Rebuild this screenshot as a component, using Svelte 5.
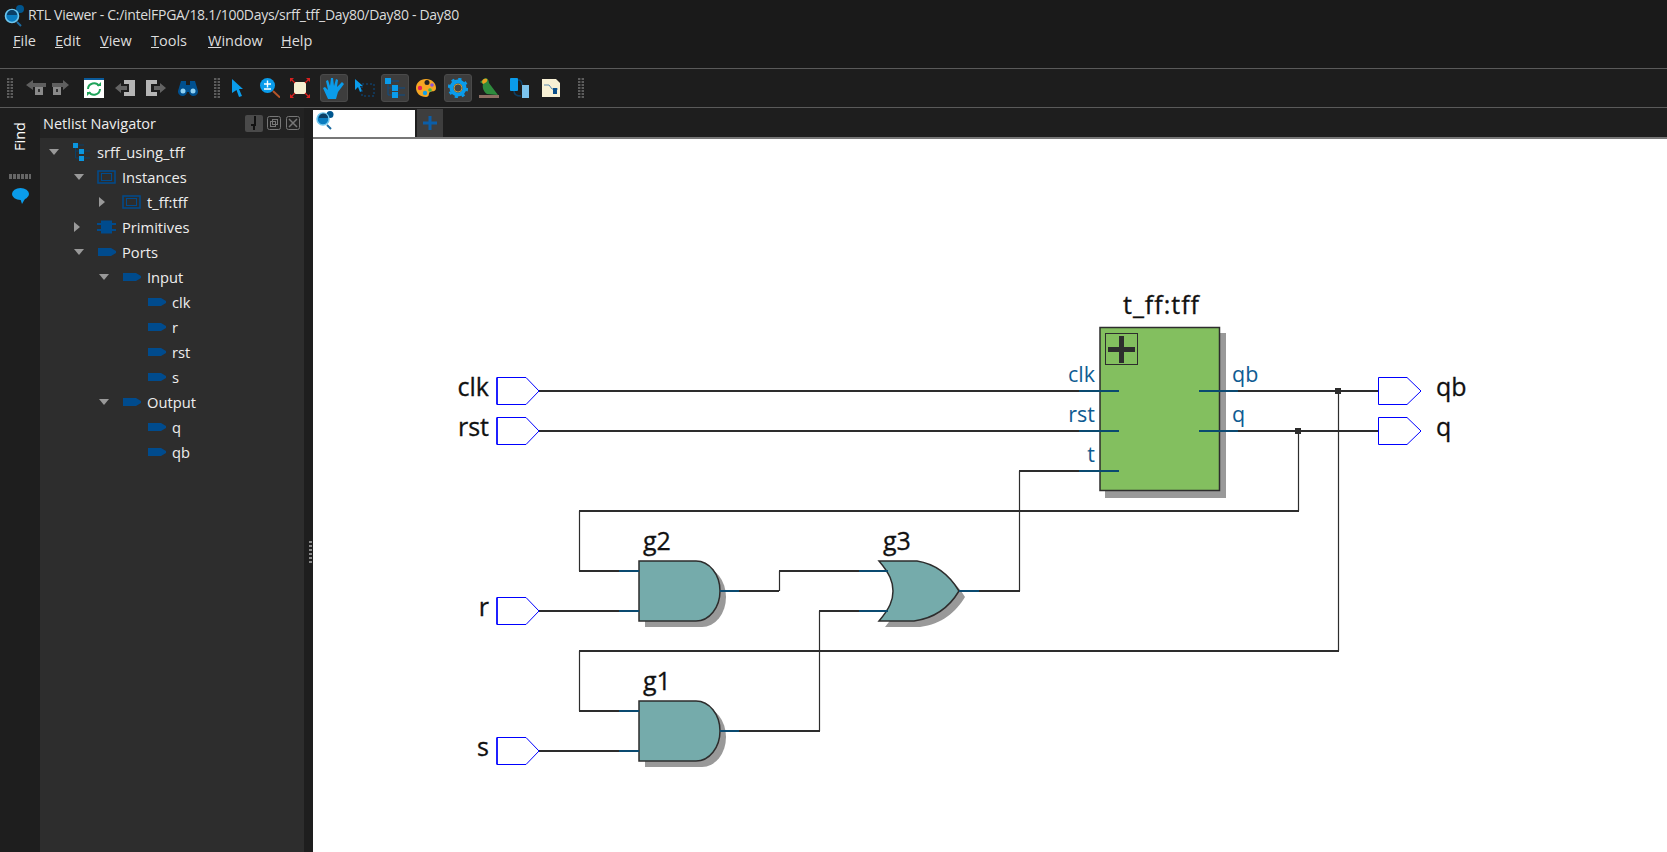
<script>
  const menus = [
    { t: 'File', w: 42 }, { t: 'Edit', w: 45 }, { t: 'View', w: 51 },
    { t: 'Tools', w: 57 }, { t: 'Window', w: 73 }, { t: 'Help', w: 40 }
  ];
  const tree = [
    { l: 0, t: 'srff_using_tff', a: 'd', i: 'h' },
    { l: 1, t: 'Instances', a: 'd', i: 'b' },
    { l: 2, t: 't_ff:tff', a: 'r', i: 'b' },
    { l: 1, t: 'Primitives', a: 'r', i: 'c' },
    { l: 1, t: 'Ports', a: 'd', i: 'p' },
    { l: 2, t: 'Input', a: 'd', i: 'p' },
    { l: 3, t: 'clk', a: '', i: 'p' },
    { l: 3, t: 'r', a: '', i: 'p' },
    { l: 3, t: 'rst', a: '', i: 'p' },
    { l: 3, t: 's', a: '', i: 'p' },
    { l: 2, t: 'Output', a: 'd', i: 'p' },
    { l: 3, t: 'q', a: '', i: 'p' },
    { l: 3, t: 'qb', a: '', i: 'p' }
  ];
  const inPins = [
    { n: 'clk', y: 391 }, { n: 'rst', y: 431 }, { n: 'r', y: 611 }, { n: 's', y: 751 }
  ];
  const outPins = [{ n: 'qb', y: 391 }, { n: 'q', y: 431 }];
  const horiz = [
    'M539 391H1080', 'M539 431H1080', 'M1238 391H1378', 'M1238 431H1378',
    'M579 511H1299', 'M579 571H620', 'M739 591H779', 'M779 571H860', 'M979 591H1020',
    'M1019 471H1080', 'M579 651H1339', 'M579 711H620', 'M739 731H820', 'M819 611H860',
    'M539 611H620', 'M539 751H620'
  ];
  const vert = [
    'M1298.500 431V511', 'M579.500 511V571', 'M779.500 571V591', 'M1019.500 471V591',
    'M1338.500 391V651', 'M579.500 651V711', 'M819.500 611V731'
  ];
  const stubs = [
    'M1079 391H1119', 'M1079 431H1119', 'M1079 471H1119', 'M1199 391H1238', 'M1199 431H1238',
    'M619 571H639', 'M619 611H639', 'M619 711H639', 'M619 751H639', 'M720 591H739', 'M720 731H739',
    'M859 571H888', 'M859 611H888', 'M959 591H979'
  ];
  const andGate = 'M639 0H696A24 30 0 0 1 696 60H639Z';
  const orGate = 'M879 561H917C936 564 950 576 959 591C950 606 936 618 914 621H879C890 608 893 600 893 591C893 582 890 574 879 561Z';
</script>

{#snippet grip()}
  <svg class="grip" width="7" height="20" viewBox="0 0 7 20">
    {#each [0, 3, 6, 9, 12, 15, 18] as y}
      <rect x="0" {y} width="2.400" height="2" fill="#5c5c5c" /><rect x="3.600" {y} width="2.400" height="2" fill="#5c5c5c" />
    {/each}
  </svg>
{/snippet}

{#snippet treeIcon(kind)}
  {#if kind === 'h'}
    <svg class="ti" width="20" height="18" viewBox="0 0 20 18">
      <rect x="1" y="0" width="5" height="5" fill="#0a96e0" /><rect x="7" y="6" width="5" height="5" fill="#0a96e0" /><rect x="7" y="13" width="5" height="5" fill="#0a96e0" />
      <path d="M6 2H12M3.500 5V8H7M3.500 8V15H7M12 8H18M12 15H18" stroke="#0b3f66" fill="none" />
    </svg>
  {:else if kind === 'b'}
    <svg class="ti" width="20" height="14" viewBox="0 0 20 14">
      <rect x="1" y="1" width="17" height="12" fill="none" stroke="#004b8d" stroke-width="1.500" /><rect x="4.500" y="3.500" width="10" height="7" fill="none" stroke="#004b8d" />
    </svg>
  {:else if kind === 'c'}
    <svg class="ti" width="20" height="14" viewBox="0 0 20 14">
      <rect x="4" y="0.500" width="11" height="13" fill="#004b8d" /><path d="M0 4H19M0 10H19" stroke="#004b8d" stroke-width="2" />
    </svg>
  {:else}
    <svg class="ti" width="20" height="10" viewBox="0 0 20 10">
      <path d="M1 1H14L19 4V6L14 9H1Z" fill="#004b8d" />
    </svg>
  {/if}
{/snippet}

<div class="app">
  <header class="title">
    <svg width="24" height="26" viewBox="0 0 24 26">
      <circle cx="18" cy="7" r="4" fill="#00568f" />
      <circle cx="10" cy="14" r="6.500" fill="#0a7cc0" stroke="#6ec6ee" stroke-width="1.600" />
      <path d="M5 13A5 5 0 0 1 15 13Z" fill="#0b3f66" />
      <path d="M15 20L19 24" stroke="#1b6aa0" stroke-width="2" />
    </svg>
    <span>RTL Viewer - C:/intelFPGA/18.1/100Days/srff_tff_Day80/Day80 - Day80</span>
  </header>
  <nav class="menu">
    {#each menus as m}
      <span class="mi" style="width:{m.w}px"><u>{m.t[0]}</u>{m.t.slice(1)}</span>
    {/each}
  </nav>
  <div class="toolbar">
    {@render grip()}
    <div class="tools first">
      <svg width="22" height="16" viewBox="0 0 22 16"><path d="M1 5L8 0V3H21V7H8V10Z" fill="#5f5f5f" /><rect x="10" y="7" width="8" height="8" fill="#8a8a8a" /><rect x="13" y="9" width="2" height="3" fill="#333" /></svg>
      <svg class="s0" width="18" height="16" viewBox="0 0 18 16"><path d="M17 5L11 0V3H0V7H11V10Z" fill="#5f5f5f" /><rect x="1" y="7" width="8" height="8" fill="#8a8a8a" /><rect x="4" y="9" width="2" height="3" fill="#333" /></svg>
      <svg class="s1" width="20" height="20" viewBox="0 0 20 20"><rect width="20" height="20" fill="#fff" /><rect width="20" height="2" fill="#0a5a9a" /><path d="M4 11A6 6 0 0 1 15 8M16 11A6 6 0 0 1 5 14" stroke="#1fa35a" stroke-width="2" fill="none" /><path d="M13 8H17V4ZM7 14H3V18Z" fill="#1fa35a" /></svg>
      <svg class="s2" width="20" height="18" viewBox="0 0 20 18"><path d="M0 9L6 4V7H12V11H6V14Z" fill="#636363" /><path d="M9 1H20V17H9V13H14V5H9Z" fill="#b5b5b5" /></svg>
      <svg class="s2" width="20" height="18" viewBox="0 0 20 18"><path d="M0 1H11V5H5V13H11V17H0Z" fill="#b5b5b5" /><path d="M8 7H14V4L20 9L14 14V11H8Z" fill="#636363" /></svg>
      <svg class="s3" width="20" height="16" viewBox="0 0 20 16"><path d="M3 1H8V5H12V1H17L20 11A4.500 4.500 0 0 1 11 12H9A4.500 4.500 0 0 1 0 11Z" fill="#00508f" /><circle cx="5" cy="11" r="2.500" fill="#8fd0f2" /><circle cx="15" cy="11" r="2.500" fill="#8fd0f2" /></svg>
    </div>
    <span class="g2">{@render grip()}</span>
    <div class="tools second">
      <svg width="12" height="18" viewBox="0 0 12 18"><path d="M0 0L11 10H7L10 17L7 18L4.500 11L0 14Z" fill="#0a9ceb" /></svg>
      <svg class="z" width="20" height="20" viewBox="0 0 20 20"><circle cx="7.500" cy="7.500" r="7.500" fill="#0a9ceb" /><path d="M4 6H11M7.500 2.500V9.500M4 11H11" stroke="#fff" stroke-width="1.400" /><path d="M13 13L20 19.500" stroke="#b5552a" stroke-width="2" /></svg>
      <svg class="y" width="20" height="20" viewBox="0 0 20 20"><rect x="4" y="4" width="12" height="12" fill="#f5efd0" /><path d="M1 1L5 5M19 1L15 5M1 19L5 15M19 19L15 15" stroke="#d8201f" stroke-width="1.200" /><path d="M0 0H4L0 4ZM20 0H16L20 4ZM0 20H4L0 16ZM20 20H16L20 16Z" fill="#d8201f" /></svg>
      <span class="tb hand"><svg width="22" height="21" viewBox="0 0 22 21"><path d="M5 21L0 10L2 9L5 12L3 3L5 2L7 8L8 0H10L11 8L13 1L15 2L14 9L19 4L21 6L15 14L13 21Z" fill="#0a9ceb" /></svg></span>
      <svg class="z2" width="20" height="18" viewBox="0 0 20 18"><path d="M0 0L8 7H5L7 12L5 13L3 8L0 11Z" fill="#0a9ceb" /><rect x="7" y="5" width="12" height="12" fill="none" stroke="#0b4f8a" stroke-dasharray="2 2" /></svg>
      <span class="tb tree-b"><svg width="20" height="20" viewBox="0 0 20 20"><rect x="0" y="0" width="6" height="6" fill="#0a9ceb" /><rect x="7" y="7" width="6" height="6" fill="#0a9ceb" /><rect x="7" y="14" width="6" height="6" fill="#0a9ceb" /><path d="M6 3H14M3 6V17H7M3 10H7M13 10H20M13 17H20" stroke="#0b4f8a" fill="none" /></svg></span>
      <svg class="p" width="20" height="20" viewBox="0 0 20 20"><path d="M10 1C16 1 20 5 20 10C20 14 16 13 14 14C12 15 14 19 10 19C4 19 0 15 0 10C0 5 4 1 10 1Z" fill="#f5a623" /><circle cx="11" cy="4.500" r="2.500" fill="#222" /><circle cx="4" cy="10" r="2.200" fill="#e8205a" /><circle cx="9" cy="15" r="2.200" fill="#12a0e8" /><circle cx="14" cy="12" r="1.800" fill="#3db54a" /><circle cx="16" cy="7" r="1.800" fill="#8c52d8" /></svg>
      <span class="tb gear"><svg width="20" height="20" viewBox="0 0 20 20"><circle cx="10" cy="10" r="6.500" fill="none" stroke="#0a9ceb" stroke-width="4" /><circle cx="10" cy="10" r="9" fill="none" stroke="#0a9ceb" stroke-width="2.400" stroke-dasharray="3.200 3.860" /><circle cx="10" cy="10" r="4" fill="#444" stroke="#c69a3a" /></svg></span>
      <svg class="b" width="20" height="20" viewBox="0 0 20 20"><rect x="0" y="17" width="20" height="3" fill="#8d6e63" /><path d="M6 0C9 0 10 3 10 5L19 17L8 16C5 14 3 10 4 6L1 4Z" fill="#2e8b3d" /><path d="M3 4C3 1 6 0 8 1C9 3 7 5 4 6Z" fill="#e8a020" /></svg>
      <svg class="s2" width="20" height="20" viewBox="0 0 20 20"><rect x="0" y="0" width="8" height="13" rx="1" fill="#0a9ceb" /><rect x="12" y="7" width="7" height="13" fill="#7cc4ee" /><path d="M8 2C11 2 12 4 12 7M11 18C6 18 4 16 4 13" stroke="#0b3f66" stroke-width="1.500" fill="none" /></svg>
      <svg class="n" width="18" height="18" viewBox="0 0 18 18"><path d="M0 0H14L18 4V18H0Z" fill="#f7f0d4" /><path d="M2 6H7L10 10H16M12 10V15" stroke="#5a8ab0" fill="none" /><rect x="11" y="9" width="4" height="6" fill="#0b4f8a" /></svg>
    </div>
    <span class="g3">{@render grip()}</span>
  </div>

  <div class="body">
    <aside class="strip">
      <span class="find">Find</span>
      <span class="dots"></span>
      <svg width="17" height="17" viewBox="0 0 17 17"><ellipse cx="8.500" cy="7" rx="8.500" ry="6" fill="#0a9ceb" /><path d="M8 11L14 10L10 17Z" fill="#0a9ceb" /></svg>
    </aside>
    <section class="nav">
      <div class="navhead">
        <span>Netlist Navigator</span>
        <div class="navbtns">
          <span class="nb on"><svg width="10" height="14" viewBox="0 0 10 14"><path d="M6 0V9H2M5 9V14" stroke="#111" stroke-width="2" fill="none" /></svg></span>
          <span class="nb"><svg width="14" height="14" viewBox="0 0 14 14"><rect x="0.500" y="0.500" width="13" height="13" rx="2" fill="none" stroke="#777" /><rect x="5.500" y="3.500" width="5" height="5" fill="none" stroke="#777" /><rect x="3.500" y="5.500" width="5" height="5" fill="none" stroke="#777" /></svg></span>
          <span class="nb"><svg width="14" height="14" viewBox="0 0 14 14"><rect x="0.500" y="0.500" width="13" height="13" rx="2" fill="none" stroke="#777" /><path d="M3 3L11 11M11 3L3 11" stroke="#777" stroke-width="1.500" /></svg></span>
        </div>
      </div>
      <ul class="tree">
        {#each tree as n}
          <li style="padding-left:{n.l * 25 + 6}px">
            <span class="arrow">
              {#if n.a === 'd'}
                <svg width="10" height="6" viewBox="0 0 10 6"><path d="M0 0H10L5 6Z" fill="#999" /></svg>
              {:else if n.a === 'r'}
                <svg width="6" height="10" viewBox="0 0 6 10"><path d="M0 0V10L6 5Z" fill="#999" /></svg>
              {/if}
            </span>
            <span class="iconbox">{@render treeIcon(n.i)}</span>
            <span class="lbl">{n.t}</span>
          </li>
        {/each}
      </ul>
    </section>
    <div class="split"><span></span></div>
    <main class="main">
      <div class="tabs">
        <div class="tab">
          <svg width="22" height="24" viewBox="0 0 22 24">
            <circle cx="14" cy="4.500" r="3.500" fill="#00568f" />
            <circle cx="7" cy="9" r="6" fill="#0a7cc0" stroke="#6ec6ee" stroke-width="1.500" />
            <path d="M3 8A4.500 4.500 0 0 1 12 8Z" fill="#0b3f66" />
            <path d="M11 15L15 19" stroke="#1b6aa0" stroke-width="2" />
          </svg>
        </div>
        <div class="plus"><svg width="14" height="14" viewBox="0 0 14 14"><path d="M7 0V14M0 7H14" stroke="#0b5ea8" stroke-width="3" /></svg></div>
      </div>
      <svg class="canvas" width="1354" height="713" viewBox="313 139 1354 713">
        <rect x="1105" y="333" width="121" height="165" fill="#999" />
        <rect x="1100" y="327.500" width="119.500" height="163" fill="#83bf5f" stroke="#2d2d2d" stroke-width="1.500" />
        <rect x="1105.500" y="333.500" width="32" height="31" fill="none" stroke="#2d2d2d" />
        <path d="M1108 349.500H1135M1121.500 336V363" stroke="#2d2d2d" stroke-width="5" />

        <path transform="translate(6 567)" d={andGate} fill="#999" />
        <path transform="translate(0 561)" d={andGate} fill="#75abab" stroke="#2d2d2d" stroke-width="1.500" />
        <path transform="translate(6 707)" d={andGate} fill="#999" />
        <path transform="translate(0 701)" d={andGate} fill="#75abab" stroke="#2d2d2d" stroke-width="1.500" />
        <path transform="translate(6 6)" d={orGate} fill="#999" />
        <path d={orGate} fill="#75abab" stroke="#2d2d2d" stroke-width="1.500" />

        {#each horiz as d}
          <path {d} class="wire" />
        {/each}
        {#each vert as d}
          <path {d} class="vwire" />
        {/each}
        {#each stubs as d}
          <path {d} class="stub" />
        {/each}
        <rect x="1335" y="388" width="6" height="6" fill="#2d2d2d" />
        <rect x="1295" y="428" width="6" height="6" fill="#2d2d2d" />

        {#each inPins as p}
          <path class="pin" d="M497 {p.y - 13.500}H526L539 {p.y}L526 {p.y + 13.500}H497Z" />
          <path d="M497 {p.y - 13.500}V{p.y + 13.500}" stroke="#0000ff" stroke-width="1.500" />
          <text class="big end" x="489" y={p.y + 5}>{p.n}</text>
        {/each}
        {#each outPins as p}
          <path class="pin" d="M1378.500 {p.y - 13.500}H1407L1421 {p.y}L1407 {p.y + 13.500}H1378.500Z" />
          <text class="big" x="1436" y={p.y + 5}>{p.n}</text>
        {/each}

        <text class="big title-t" x="1123" y="314">t_ff:tff</text>
        <text class="big" x="643" y="550">g2</text>
        <text class="big" x="643" y="690">g1</text>
        <text class="big" x="883" y="550">g3</text>

        <text class="port end" x="1095" y="382">clk</text>
        <text class="port end" x="1095" y="422">rst</text>
        <text class="port end" x="1095" y="462">t</text>
        <text class="port" x="1232" y="382">qb</text>
        <text class="port" x="1232" y="422">q</text>
      </svg>
    </main>
  </div>
</div>

<style>
  :global(body) { margin: 0; background: #1e1e1e; overflow: hidden; }
  .app { width: 1667px; height: 852px; display: flex; flex-direction: column; background: #1e1e1e; color: #eee; font-family: "Open Sans", "Noto Sans", sans-serif; font-size: 14.500px; overflow: hidden; }
  .title { height: 29px; display: flex; align-items: center; gap: 2px; background: #1a1a1a; padding-left: 2px; box-sizing: border-box; font-size: 14px; letter-spacing: -0.300px; }
  .title span { color: #dcdcdc; }
  .menu { height: 40px; display: flex; background: #1a1a1a; padding: 0 0 17px 13px; box-sizing: border-box; align-items: center; border-bottom: 1px solid #5a5a5a; }
  .mi { color: #ddd; flex: none; }
  .toolbar { height: 39px; box-sizing: border-box; border-bottom: 1px solid #5a5a5a; display: flex; align-items: center; padding-left: 7px; background: #1d1d1d; }
  .tools { display: flex; align-items: center; }
  .first { margin-left: 11px; }
  .s0 { margin-left: 5px; }
  .s1 { margin-left: 14px; }
  .s2 { margin-left: 11px; }
  .s3 { margin-left: 12px; }
  .g2 { margin-left: 16px; display: flex; }
  .second { margin-left: 11px; }
  .z { margin-left: 16px; }
  .y { margin-left: 10px; }
  .z2 { margin-left: 7px; }
  .tb { width: 28px; height: 28px; background: #3d3d3d; border: 1px solid #4a4a4a; border-radius: 3px; display: flex; align-items: center; justify-content: center; box-sizing: border-box; flex: none; }
  .hand { margin-left: 10px; }
  .tree-b { margin-left: 6px; }
  .p { margin-left: 7px; }
  .gear { margin-left: 8px; }
  .b { margin-left: 7px; }
  .n { margin-left: 12px; }
  .g3 { margin-left: 18px; display: flex; }
  .body { flex: 1; display: flex; min-height: 0; }
  .strip { width: 40px; display: flex; flex-direction: column; align-items: center; background: #1e1e1e; padding-top: 14px; box-sizing: border-box; }
  .find { writing-mode: vertical-rl; transform: rotate(180deg); font-size: 14.500px; color: #fff; line-height: 16px; }
  .dots { width: 22px; height: 5px; margin: 23px 0 8px; background: repeating-linear-gradient(90deg, #666 0 3px, transparent 3px 4px); }
  .nav { width: 264px; display: flex; flex-direction: column; background: #2d2d2d; }
  .navhead { height: 30px; background: #222; display: flex; align-items: center; justify-content: space-between; padding: 0 4px 0 3px; box-sizing: border-box; color: #eee; }
  .navbtns { display: flex; gap: 5px; align-items: center; }
  .nb { width: 14px; height: 15px; display: flex; align-items: center; justify-content: center; }
  .nb.on { width: 18px; height: 17px; background: #4a4a4a; border-radius: 2px; margin-right: -1px; }
  .tree { list-style: none; margin: 0; padding: 1px 0 0; font-size: 14.700px; }
  .tree li { height: 25px; display: flex; align-items: center; }
  .arrow { width: 16px; margin-left: 3px; display: flex; align-items: center; }
  .iconbox { width: 25px; margin-left: 7px; display: flex; align-items: center; }
  .lbl { color: #eee; }
  .split { width: 9px; background: #1e1e1e; position: relative; }
  .split span { position: absolute; left: 5px; top: 433px; width: 3px; height: 24px; background: repeating-linear-gradient(180deg, #888 0 2px, transparent 2px 4px); }
  .main { flex: 1; display: flex; flex-direction: column; min-width: 0; }
  .tabs { height: 31px; flex: none; display: flex; align-items: flex-end; background: #1e1e1e; border-bottom: 2px solid #777; box-sizing: border-box; }
  .tab { width: 102px; height: 27px; background: #fff; display: flex; align-items: flex-start; padding-left: 3px; box-sizing: border-box; }
  .plus { width: 26px; height: 28px; background: #3e3e3e; margin-left: 2px; display: flex; align-items: center; justify-content: center; }
  .canvas { display: block; background: #fff; flex: none; }
  .wire { fill: none; stroke: #2d2d2d; stroke-width: 2; }
  .vwire { fill: none; stroke: #2d2d2d; stroke-width: 1.200; }
  .stub { fill: none; stroke: #0a4a70; stroke-width: 2; }
  .pin { fill: #fff; stroke: #0000ff; stroke-width: 1; }
  .big { font-family: "Open Sans", sans-serif; font-size: 25px; fill: #111; stroke: #111; stroke-width: 0.300px; }
  .title-t { letter-spacing: 1px; }
  .port { font-family: "Open Sans", sans-serif; font-size: 21.500px; fill: #0f5c92; }
  .end { text-anchor: end; }
</style>
